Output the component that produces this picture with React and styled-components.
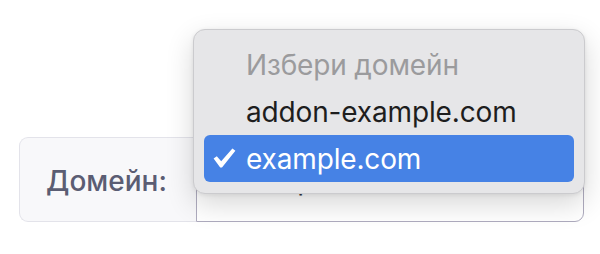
import styled, { createGlobalStyle } from "styled-components";

const GlobalStyle = createGlobalStyle`
  html, body {
    margin: 0;
    padding: 0;
    background: #ffffff;
    font-family: Inter, "Noto Sans", sans-serif;
  }
`;

const Page = styled.div`
  padding: 137px 16px 0 19px;
  height: 254px;
  box-sizing: border-box;
`;

const InputGroup = styled.div`
  display: flex;
  width: 565px;
  height: 85px;
`;

const Label = styled.div`
  display: flex;
  align-items: center;
  box-sizing: border-box;
  width: 177px;
  padding-left: 26px;
  padding-top: 2px;
  background: #f8f8fa;
  border: 1.5px solid #e3e3ea;
  border-right: none;
  border-radius: 9px 0 0 9px;
  color: #5b5d73;
  font-size: 28px;
  font-weight: 500;
`;

const SelectBox = styled.div`
  position: relative;
  flex: 1;
  display: flex;
  align-items: center;
  box-sizing: border-box;
  padding-left: 29px;
  background: #ffffff;
  border: 1.5px solid #aeabbe;
  border-radius: 0 9px 9px 0;
  color: #34353f;
  font-size: 28px;
`;

const Menu = styled.ul`
  position: absolute;
  left: -4px;
  top: -109px;
  width: 392px;
  box-sizing: border-box;
  margin: 0;
  padding: 11px 10px;
  list-style: none;
  background: #e6e6e8;
  border: 1px solid #cbcbce;
  border-radius: 12px;
  box-shadow: 0 10px 28px rgba(0, 0, 0, 0.16), 0 1px 4px rgba(0, 0, 0, 0.08);
`;

const Option = styled.li`
  position: relative;
  display: flex;
  align-items: center;
  height: 47px;
  padding-left: 42px;
  border-radius: 6px;
  font-size: 28px;
  letter-spacing: -0.15px;
  color: ${(p) => (p.$disabled ? "#9b9b9d" : p.$selected ? "#ffffff" : "#1e1e1e")};
  background: ${(p) => (p.$selected ? "#4682e5" : "transparent")};
`;

const Check = styled.svg`
  position: absolute;
  left: 9px;
  top: 13px;
  width: 23px;
  height: 20px;
`;

const options = [
  { label: "Избери домейн", disabled: true },
  { label: "addon-example.com" },
  { label: "example.com", selected: true },
];

export default function App() {
  return (
    <>
      <GlobalStyle />
      <Page>
        <InputGroup>
          <Label>Домейн:</Label>
          <SelectBox>
            example.com
            <Menu>
              {options.map((o) => (
                <Option key={o.label} $disabled={o.disabled} $selected={o.selected}>
                  {o.selected && (
                    <Check viewBox="0 0 23 20">
                      <path
                        d="M0.6 10.6 L3.8 8.2 L8.2 13.2 L19.4 0.6 L22.4 2.8 L9 19.4 L7.2 19.4 Z"
                        fill="#ffffff"
                      />
                    </Check>
                  )}
                  {o.label}
                </Option>
              ))}
            </Menu>
          </SelectBox>
        </InputGroup>
      </Page>
    </>
  );
}
